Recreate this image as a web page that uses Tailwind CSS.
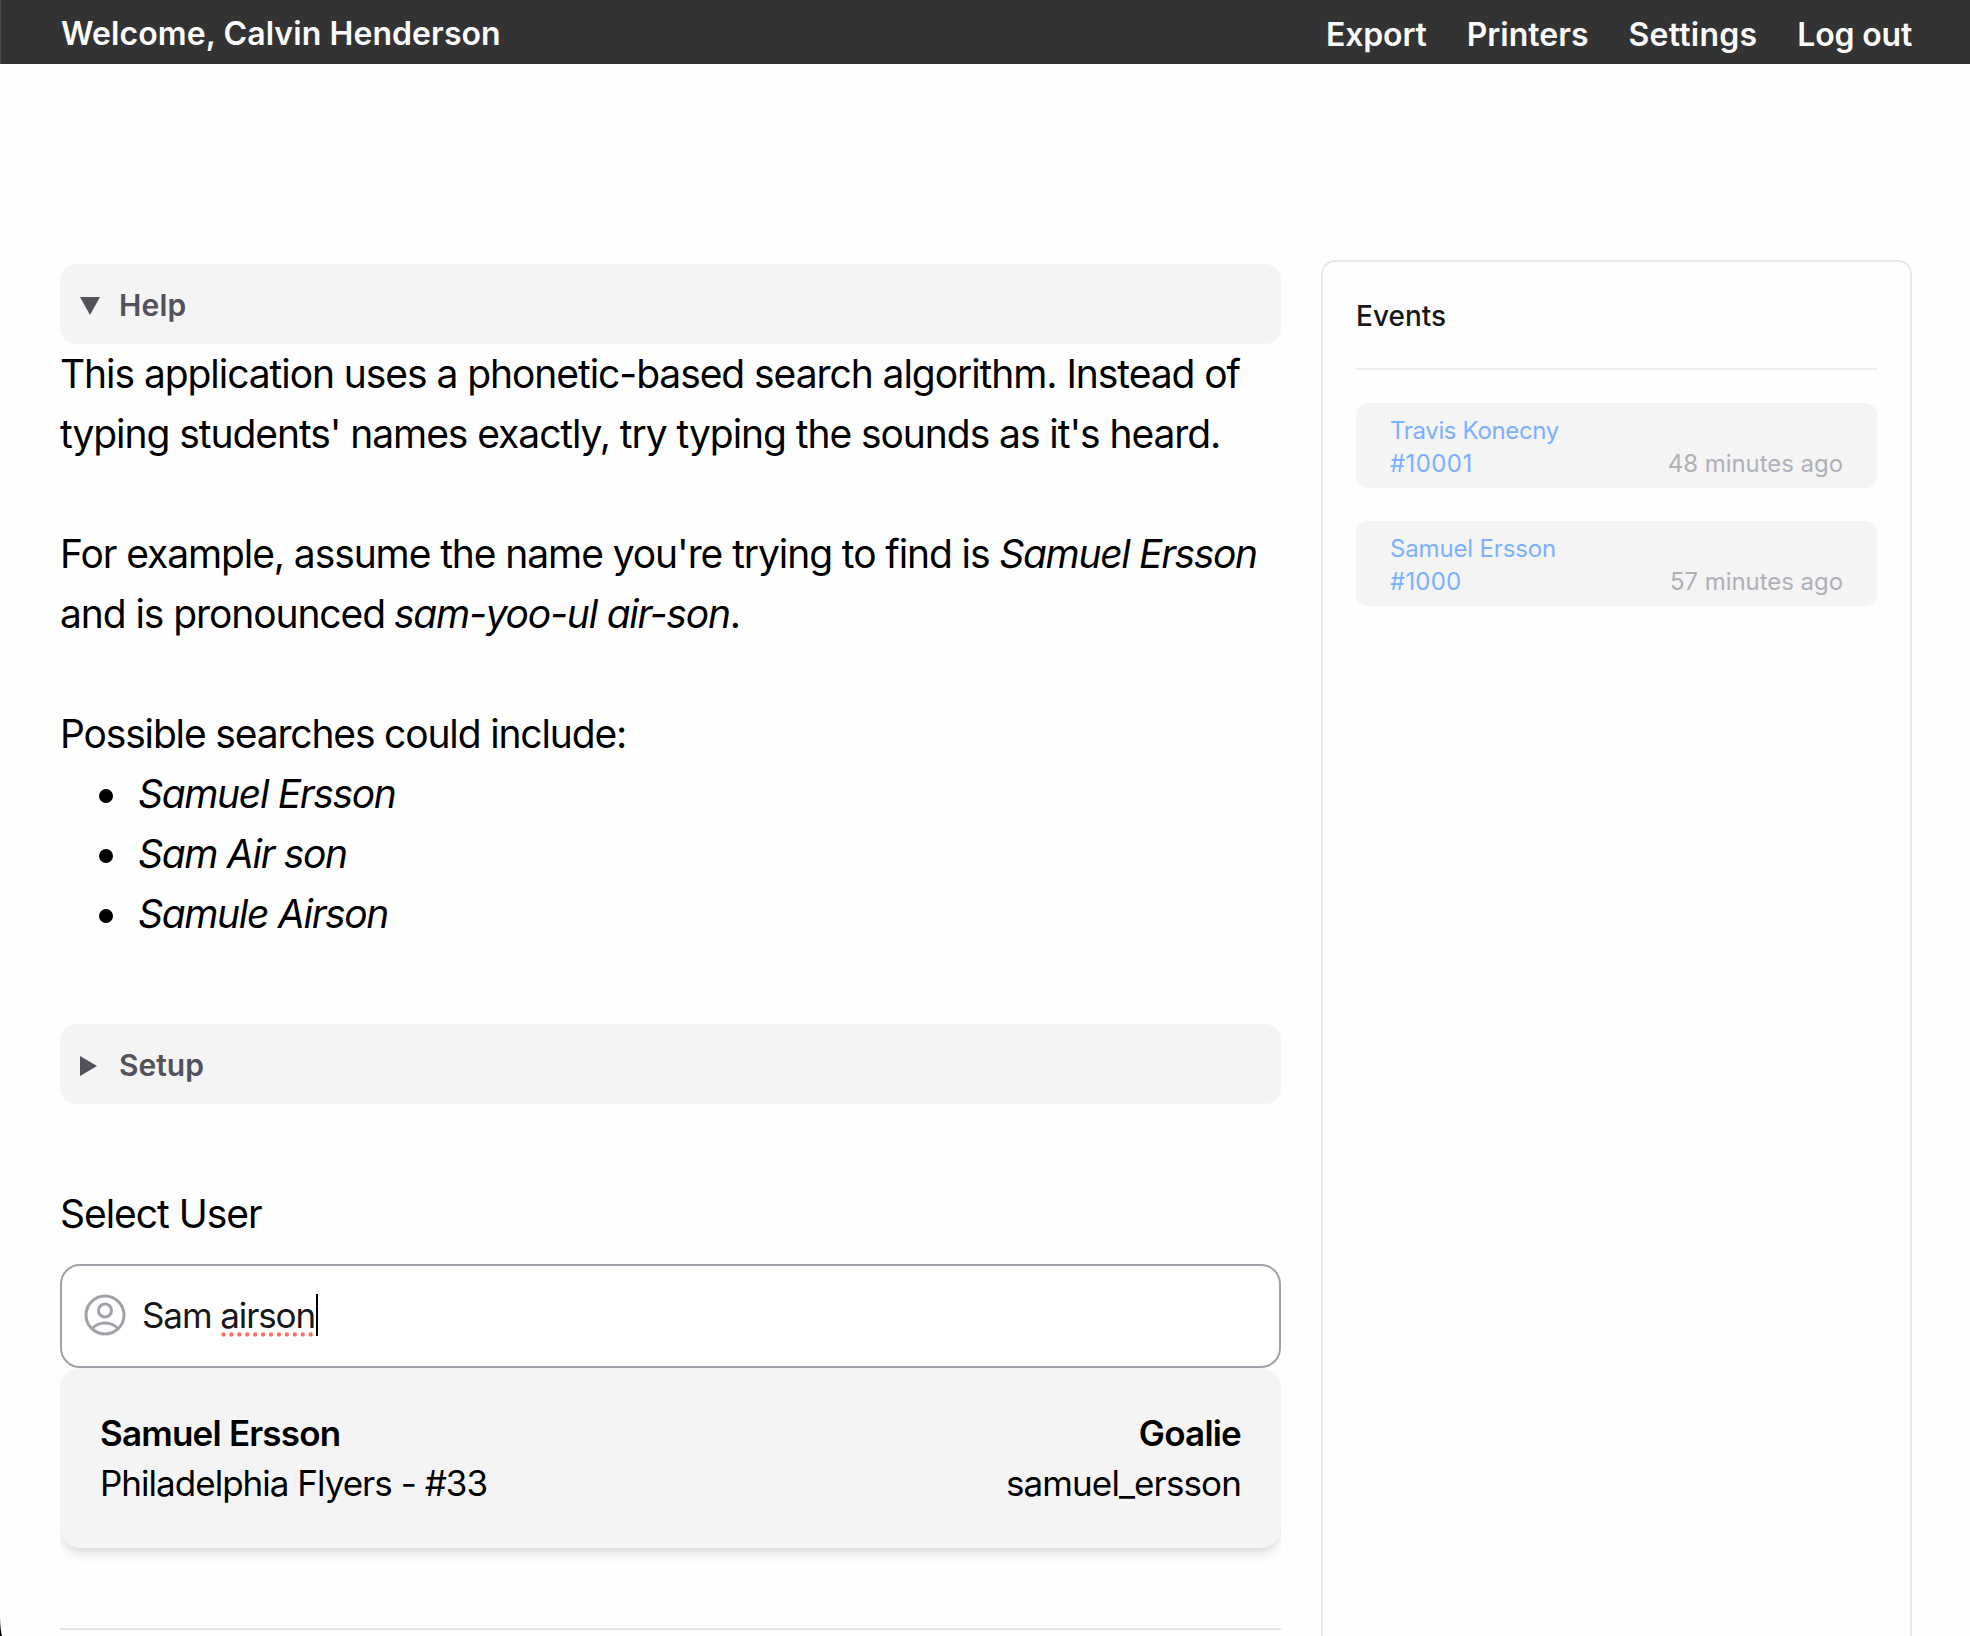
<!DOCTYPE html>
<html lang="en">
<head>
<meta charset="utf-8">
<title>Select User</title>
<script src="https://cdn.jsdelivr.net/npm/@tailwindcss/browser@4"></script>
</head>
<body class="relative h-[1636px] w-[1970px] overflow-hidden bg-[#fefefe] font-['Inter',sans-serif] text-black">
  <header class="flex h-16 items-center justify-between border-l border-[#4a4a4a] bg-[#333333] pr-[58px] pl-[60px] text-[32px] leading-10 font-semibold text-[#fafafa]">
    <div class="pt-[4px] tracking-[0.08px]">Welcome, Calvin Henderson</div>
    <nav class="flex gap-10 pt-[6px]">
      <a class="tracking-[-0.15px]">Export</a>
      <a>Printers</a>
      <a class="tracking-[0.25px]">Settings</a>
      <a class="tracking-[-0.2px]">Log out</a>
    </nav>
  </header>

  <div class="flex gap-10 pl-[60px]">
    <main class="w-[1221px] pt-[200px]">
      <section>
        <div class="flex h-20 items-center rounded-2xl bg-[#f4f4f4] pl-5 text-[30px] font-semibold text-[#52525b]">
          <svg class="mt-[3px] h-[18px] w-5" viewBox="0 0 20 18" fill="currentColor"><path d="M0 0H20L10 18Z"/></svg>
          <span class="pt-[3px] pl-[19px] tracking-[0.2px]">Help</span>
        </div>
        <div class="text-[39px] leading-[60px] tracking-[-1.065px] whitespace-nowrap">
          <p>This application uses a phonetic-based search algorithm. Instead of<br>typing students' names exactly, try typing the sounds as it's heard.</p>
          <p class="pt-[60px] tracking-[-1.09px]">For example, assume the name you're trying to find is <em class="tracking-[-1.34px]">Samuel Ersson</em><br>and is pronounced <em class="-ml-px tracking-[-1.21px]">sam-yoo-ul air-son</em>.</p>
          <p class="pt-[60px] tracking-[-1.16px]">Possible searches could include:</p>
          <ul class="pl-[39px] tracking-[-1.33px] italic">
            <li class="flex items-center gap-[25px]"><span class="mt-[3px] size-3.5 rounded-full bg-black"></span>Samuel Ersson</li>
            <li class="flex items-center gap-[25px]"><span class="mt-[3px] size-3.5 rounded-full bg-black"></span>Sam Air son</li>
            <li class="flex items-center gap-[25px]"><span class="mt-[3px] size-3.5 rounded-full bg-black"></span>Samule Airson</li>
          </ul>
        </div>
      </section>

      <section class="mt-20 flex h-20 items-center rounded-2xl bg-[#f4f4f4] pl-5 text-[30px] font-semibold text-[#52525b]">
        <svg class="mt-1 h-5 w-[17px]" viewBox="0 0 17 20" fill="currentColor"><path d="M0 0L17 10L0 20Z"/></svg>
        <span class="pt-[3px] pl-[22px]">Setup</span>
      </section>

      <section class="mt-20">
        <h2 class="text-[39px] leading-[60px] tracking-[-1.03px]">Select User</h2>
        <div class="mt-5 flex h-[104px] items-center rounded-[20px] border-2 border-[#a1a1aa] bg-white pl-[22px] text-[35px] tracking-[-1.1px] text-[#18181b]">
          <svg class="-mt-0.5 size-[42px] text-[#a1a1aa]" viewBox="-21 -21 42 42" fill="none" stroke="currentColor" stroke-width="3"><circle r="19"/><circle cy="-4.5" r="6.5"/><path d="M-13.2 13.9A17.5 17.5 0 0 1 13.2 13.9"/></svg>
          <div class="-mt-0.5 pl-4 leading-[50px]">Sam <span class="relative">airson<svg class="absolute top-[38px] left-[1px] h-[5px] w-[93px]" viewBox="0 0 93 5"><path d="M2.5 2.5H91" stroke="#ff6b66" stroke-width="4.3" stroke-linecap="round" stroke-dasharray="0 7.92"/></svg></span></div>
          <span class="-mt-0.5 ml-[1px] h-[42px] w-0.5 bg-black"></span>
        </div>
        <div class="overflow-x-clip pb-20">
          <div class="flex justify-between rounded-[20px] bg-[#f4f4f4] p-10 text-[35px] leading-[50px] shadow-[0_8px_12px_-2px_rgba(0,0,0,0.1),0_4px_8px_-4px_rgba(0,0,0,0.1)]">
            <div>
              <div class="font-semibold tracking-[-0.8px]">Samuel Ersson</div>
              <div class="tracking-[-0.98px]">Philadelphia Flyers - #33</div>
            </div>
            <div class="text-right">
              <div class="font-semibold tracking-[-0.8px]">Goalie</div>
              <div class="tracking-[-0.88px]">samuel_ersson</div>
            </div>
          </div>
        </div>
        <hr class="border-t-2 border-[#e4e4e7]">
      </section>
    </main>

    <aside class="mt-[196px] h-[1400px] w-[591px] rounded-t-[14px] border-2 border-[#e8e8ea] px-[33px] pt-[33px]">
      <h3 class="border-b-2 border-[#e9edf0] pb-[31px] text-[28px] leading-[42px] font-medium text-[#18181b]">Events</h3>
      <ul class="mt-[33px] flex flex-col gap-[33px] text-2xl leading-[33px]">
        <li class="flex h-[85px] items-start justify-between rounded-xl bg-[#f4f4f4] pt-[11px] pr-[34px] pl-[34px]">
          <a class="text-[#7ab1ff]"><span class="block tracking-[-0.35px]">Travis Konecny</span><span class="block tracking-[0.4px]">#10001</span></a>
          <span class="pt-[33px] tracking-[-0.05px] text-[#b0b0b7]">48 minutes ago</span>
        </li>
        <li class="flex h-[85px] items-start justify-between rounded-xl bg-[#f4f4f4] pt-[11px] pr-[34px] pl-[34px]">
          <a class="text-[#7ab1ff]"><span class="block tracking-[-0.15px]">Samuel Ersson</span><span class="block tracking-[0.2px]">#1000</span></a>
          <span class="pt-[33px] tracking-[-0.05px] text-[#b0b0b7]">57 minutes ago</span>
        </li>
      </ul>
    </aside>
  </div>

  <!-- rounded window corner -->
  <svg class="absolute bottom-0 left-0 h-[18px] w-0.5" viewBox="0 0 2 18"><path d="M0 0Q0.4 12 2 18H0Z" fill="#000"/></svg>
</body>
</html>
